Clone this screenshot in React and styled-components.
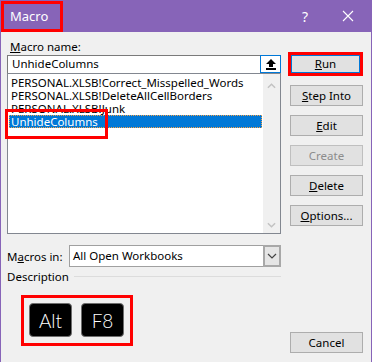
import React from "react";
import styled, { createGlobalStyle } from "styled-components";

const GlobalStyle = createGlobalStyle`
  html, body {
    margin: 0;
    padding: 0;
    background: #f0f0f0;
  }
  * {
    box-sizing: border-box;
  }
`;

const macros = [
  "PERSONAL.XLSB!Correct_Misspelled_Words",
  "PERSONAL.XLSB!DeleteAllCellBorders",
  "PERSONAL.XLSB!Junk",
  "UnhideColumns",
];

const buttons = [
  { label: "Step Into", key: "S" },
  { label: "Edit", key: "E" },
  { label: "Create", disabled: true },
  { label: "Delete", key: "D" },
  { label: "Options...", key: "O" },
];

const App = () => {
  return (
    <Window>
      <GlobalStyle />
      <TitleBar>
        <TitleText>Macro</TitleText>
        <TitleActions>
          <HelpGlyph>?</HelpGlyph>
          <CloseIcon viewBox="0 0 12 12">
            <path d="M1 1 L11 11 M11 1 L1 11" />
          </CloseIcon>
        </TitleActions>
      </TitleBar>
      <Body>
        <LeftColumn>
          <Label>
            <u>M</u>acro name:
          </Label>
          <NameField>
            <NameText>UnhideColumns</NameText>
            <UpButton>
              <svg width="12" height="12" viewBox="0 0 12 12">
                <path d="M6 1 L11 6 L8 6 L8 9 L4 9 L4 6 L1 6 Z" fill="#000" />
                <rect x="1" y="10" width="10" height="2" fill="#000" />
              </svg>
            </UpButton>
          </NameField>
          <ListBox>
            <Rows>
              {macros.map((m) => (
                <Row key={m} selected={m === "UnhideColumns"}>
                  {m}
                </Row>
              ))}
            </Rows>
            <ScrollBar>
              <Chevron viewBox="0 0 10 6">
                <path d="M1 5 L5 1 L9 5" />
              </Chevron>
              <Chevron viewBox="0 0 10 6">
                <path d="M1 1 L5 5 L9 1" />
              </Chevron>
            </ScrollBar>
          </ListBox>
          <MacrosInRow>
            <InlineLabel>
              M<u>a</u>cros in:
            </InlineLabel>
            <Combo>
              <ComboText>All Open Workbooks</ComboText>
              <ComboArrow>
                <svg width="10" height="6" viewBox="0 0 10 6">
                  <path d="M1 1 L5 5 L9 1" fill="none" stroke="#444" strokeWidth="1.2" />
                </svg>
              </ComboArrow>
            </Combo>
          </MacrosInRow>
          <GroupHeading>
            <span>Description</span>
            <Rule />
          </GroupHeading>
          <KeyBox>
            <KeyCap>Alt</KeyCap>
            <KeyCap>F8</KeyCap>
          </KeyBox>
        </LeftColumn>
        <RightColumn>
          <RunFrame>
            <DefaultButton>
              <u>R</u>un
            </DefaultButton>
          </RunFrame>
          {buttons.map((b) => (
            <Button key={b.label} disabled={b.disabled}>
              {b.key ? (
                <>
                  <u>{b.label[0]}</u>
                  {b.label.slice(1)}
                </>
              ) : (
                b.label
              )}
            </Button>
          ))}
          <CancelButton>Cancel</CancelButton>
        </RightColumn>
      </Body>
    </Window>
  );
};

const Window = styled.div`
  width: 372px;
  height: 362px;
  background: #f0f0f0;
  border-left: 1px solid #8764b8;
  border-right: 1px solid #8764b8;
  display: flex;
  flex-direction: column;
  font-family: "Noto Sans", "DejaVu Sans", sans-serif;
  font-size: 11.5px;
  color: #000;
  overflow: hidden;
`;

const TitleBar = styled.div`
  height: 32px;
  margin: 0 -1px;
  background: #8764b8;
  display: flex;
  align-items: center;
  justify-content: space-between;
`;

const TitleText = styled.div`
  margin-left: 1px;
  height: 31px;
  width: 62px;
  border: 3px solid #ff0000;
  color: #fff;
  font-size: 13px;
  padding-left: 6px;
  display: flex;
  align-items: center;
`;

const TitleActions = styled.div`
  display: flex;
  align-items: center;
  gap: 34px;
  padding-right: 18px;
`;

const HelpGlyph = styled.span`
  color: #fff;
  font-size: 14px;
`;

const CloseIcon = styled.svg`
  width: 12px;
  height: 12px;
  stroke: #fff;
  stroke-width: 1.1;
  fill: none;
`;

const Body = styled.div`
  flex: 1;
  display: grid;
  grid-template-columns: 274px 73px;
  column-gap: 9px;
  padding: 7px 7px 9px 6px;
`;

const LeftColumn = styled.div`
  display: flex;
  flex-direction: column;
`;

const Label = styled.div`
  height: 15px;
  line-height: 15px;
  padding-left: 3px;
`;

const NameField = styled.div`
  margin-top: 1px;
  height: 18px;
  background: #fff;
  border: 1px solid #7a7a7a;
  border-bottom: none;
  display: flex;
  align-items: stretch;
`;

const NameText = styled.div`
  flex: 1;
  padding-left: 4px;
  line-height: 16px;
`;

const UpButton = styled.div`
  width: 21px;
  margin: -1px -1px 0 0;
  border: 1px solid #0078d7;
  background: #fff;
  display: flex;
  align-items: center;
  justify-content: center;
`;

const ListBox = styled.div`
  height: 161px;
  background: #fff;
  border: 1px solid #828790;
  display: flex;
`;

const Rows = styled.div`
  flex: 1;
  padding: 2px 1px 0 1px;
`;

const Row = styled.div`
  height: 13px;
  line-height: 13px;
  padding-left: 2px;
  white-space: nowrap;
  background: ${(p) => (p.selected ? "#0078d7" : "transparent")};
  color: ${(p) => (p.selected ? "#fff" : "#000")};
  outline: ${(p) => (p.selected ? "1px dotted #f3a24a" : "none")};
  outline-offset: -1px;
  position: relative;
  &::after {
    content: "";
    display: ${(p) => (p.selected ? "block" : "none")};
    position: absolute;
    left: -4px;
    top: -6px;
    width: 97px;
    height: 24px;
    border: 3px solid #ff0000;
  }
`;

const ScrollBar = styled.div`
  width: 17px;
  background: #f0f0f0;
  display: flex;
  flex-direction: column;
  justify-content: space-between;
  align-items: center;
  padding: 9px 0 5px;
`;

const Chevron = styled.svg`
  width: 9px;
  height: 6px;
  fill: none;
  stroke: #c2c2c2;
  stroke-width: 1.6;
`;

const MacrosInRow = styled.div`
  margin-top: 11px;
  height: 22px;
  display: flex;
  align-items: center;
`;

const InlineLabel = styled.div`
  width: 62px;
`;

const Combo = styled.div`
  flex: 1;
  height: 22px;
  border: 1px solid #a0a0a0;
  background: #fff;
  display: flex;
`;

const ComboText = styled.div`
  flex: 1;
  padding-left: 3px;
  line-height: 20px;
`;

const ComboArrow = styled.div`
  width: 18px;
  margin: -1px -1px -1px 0;
  background: #e5e5e5;
  border: 2px solid #a8a8a8;
  display: flex;
  align-items: center;
  justify-content: center;
`;

const GroupHeading = styled.div`
  margin-top: 2px;
  height: 15px;
  display: flex;
  align-items: center;
  gap: 5px;
  span {
    line-height: 15px;
  }
`;

const Rule = styled.div`
  flex: 1;
  height: 1px;
  background: #dcdcdc;
`;

const KeyBox = styled.div`
  margin: 11px 0 0 14px;
  width: 112px;
  height: 51px;
  border: 3px solid #ff0000;
  padding: 5px 6px 5px 5px;
  display: flex;
  gap: 9px;
`;

const KeyCap = styled.div`
  width: 43px;
  height: 34px;
  background: #000;
  border: 1px solid #6e6e6e;
  border-radius: 4px;
  color: #fff;
  font-family: "Lato", "DejaVu Sans", sans-serif;
  font-weight: 300;
  font-size: 19px;
  display: flex;
  align-items: center;
  justify-content: center;
`;

const RightColumn = styled.div`
  display: flex;
  flex-direction: column;
  padding-top: 13px;
`;

const RunFrame = styled.div`
  margin-left: -2px;
  width: 75px;
  height: 24px;
  border: 3px solid #ff0000;
  display: flex;
`;

const Button = styled.div`
  margin-top: 9px;
  height: 21px;
  background: #e1e1e1;
  border: 1px solid ${(p) => (p.disabled ? "#bfbfbf" : "#adadad")};
  color: ${(p) => (p.disabled ? "#8c8c8c" : "#000")};
  display: flex;
  align-items: center;
  justify-content: center;
  line-height: 1;
`;

const DefaultButton = styled(Button)`
  margin-top: 0;
  flex: 1;
  height: auto;
  border-color: #0078d7;
`;

const CancelButton = styled(Button)`
  margin-top: auto;
`;

export default App;
